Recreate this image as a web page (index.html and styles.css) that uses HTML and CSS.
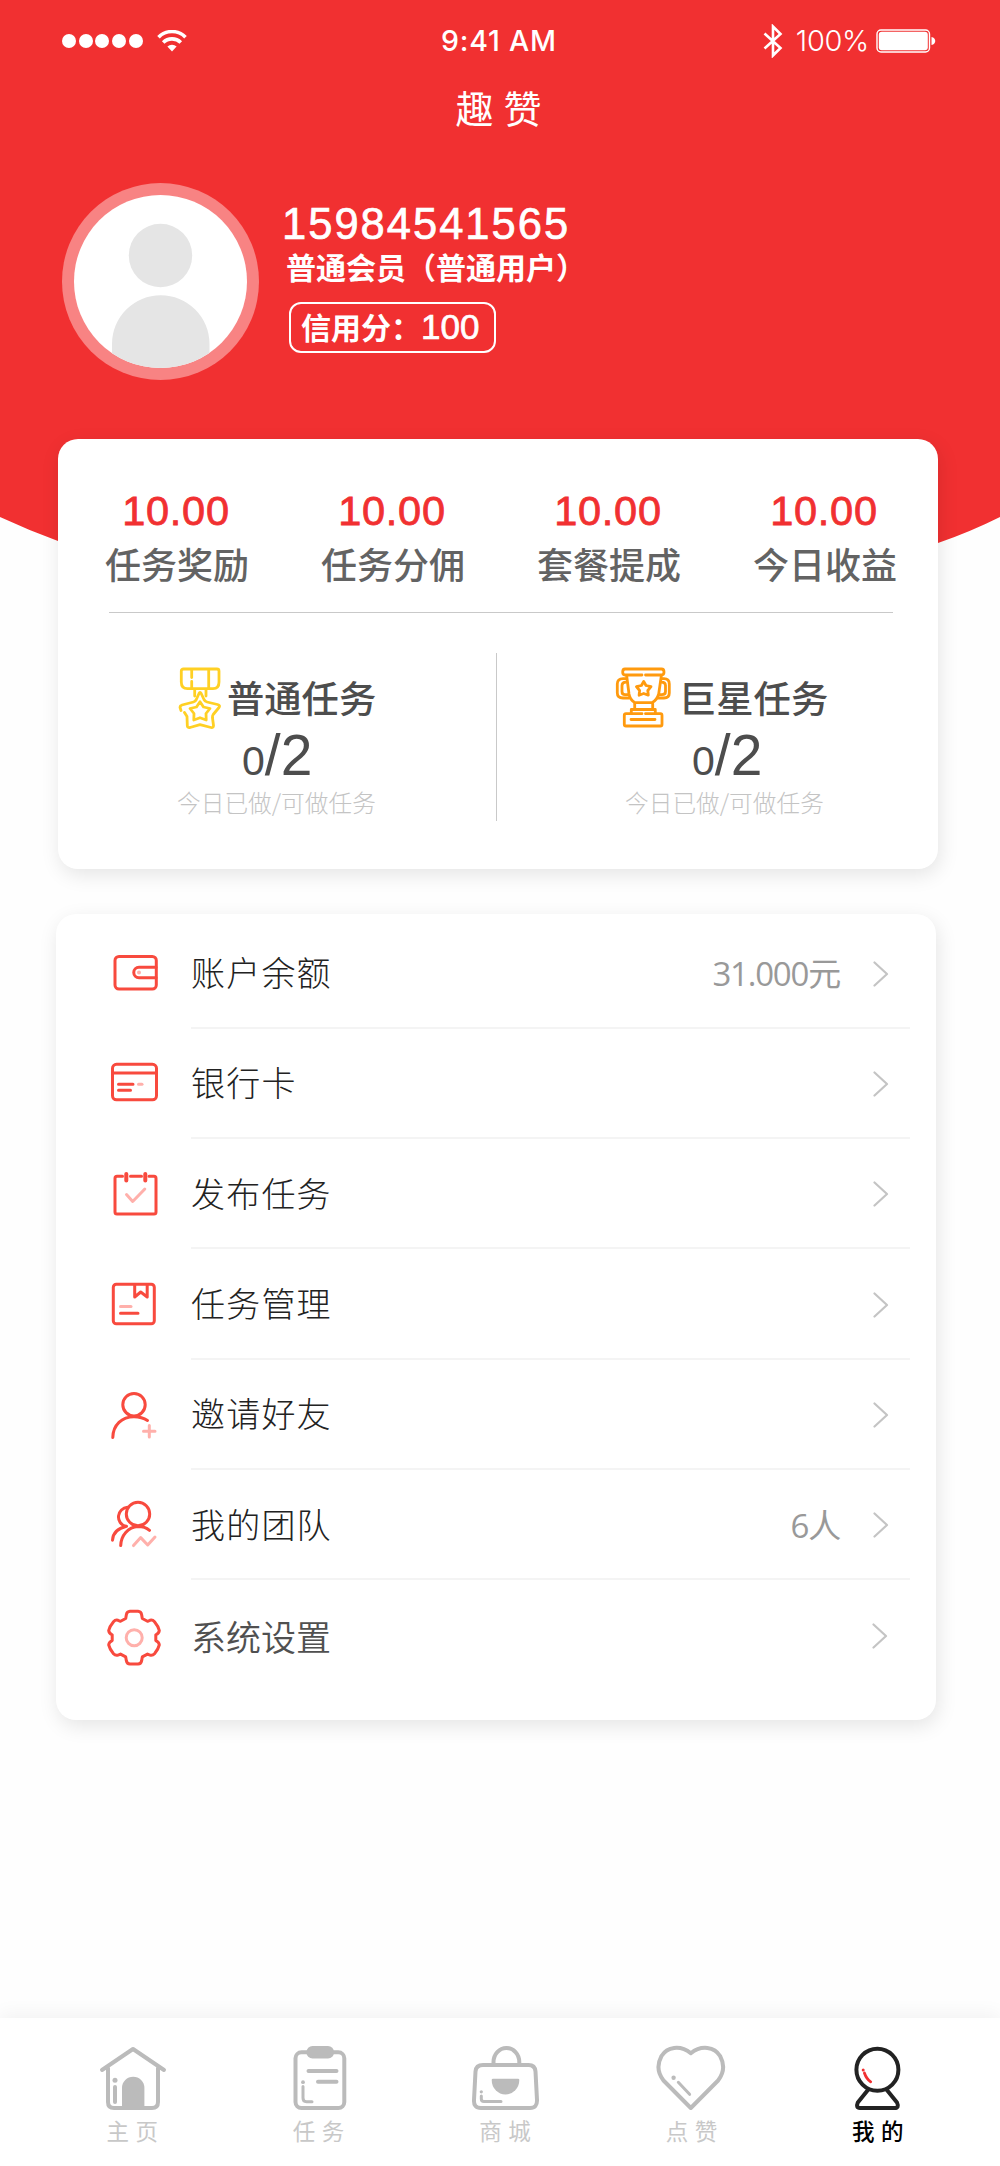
FILE: index.html
```html
<!DOCTYPE html>
<html lang="zh-CN">
<head>
<meta charset="utf-8">
<title>趣赞</title>
<link rel="stylesheet" href="styles.css">
</head>
<body>
<div class="page">
  <header class="hero">
    <div class="status">
      <div class="signal">
        <i class="dot"></i><i class="dot"></i><i class="dot"></i><i class="dot"></i><i class="dot"></i>
        <svg class="wifi" width="30" height="22" viewBox="0 0 30 22" fill="none" stroke="#fff" stroke-width="3.6"><path d="M1.500 7.200a19 19 0 0 1 27 0M6.200 12.500a12.500 12.500 0 0 1 17.600 0"/><path d="M15 21.500l-4.600-5a6.600 6.600 0 0 1 9.200 0z" fill="#fff" stroke="none"/></svg>
      </div>
      <div class="time">9:41 AM</div>
      <div class="power">
        <svg width="20" height="34" viewBox="0 0 20 34" fill="none" stroke="#fff" stroke-width="2.600"><path d="M1.500 9.500L17.500 24 10 31.500V2.500L17.500 10 1.500 24.500"/></svg>
        <span class="percent">100%</span>
        <svg width="60" height="24" viewBox="0 0 60 24"><rect x="1" y="1" width="52.500" height="22" rx="4" fill="none" stroke="#fff" stroke-width="1.400"/><rect x="2.800" y="2.800" width="49" height="18.400" rx="3" fill="#fff"/><path d="M55.500 8c5 1 5 7 0 8z" fill="#fff"/></svg>
      </div>
    </div>
    <h1 class="title">趣赞</h1>
    <div class="profile">
      <svg class="avatar" width="197" height="197" viewBox="0 0 197 197">
        <defs><clipPath id="face"><circle cx="98.500" cy="98.500" r="86.500"/></clipPath></defs>
        <circle cx="98.500" cy="98.500" r="98.500" fill="#f88383"/>
        <circle cx="98.500" cy="98.500" r="86.500" fill="#fff"/>
        <g clip-path="url(#face)" fill="#e5e5e5"><circle cx="98.500" cy="72.500" r="31.700"/><path d="M50 200v-39a48.700 48.700 0 0 1 97.500 0v39z"/></g>
      </svg>
      <div class="who">
        <div class="phone">15984541565</div>
        <div class="level">普通会员<span class="paren" lang="zh-TW">（</span>普通用户<span class="paren" lang="zh-TW">）</span></div>
        <div class="credit">信用分：<span class="score">100</span></div>
      </div>
    </div>
  </header>

  <section class="card summary">
    <div class="stats">
      <div class="stat"><b class="amount">10.00</b><span class="label">任务奖励</span></div>
      <div class="stat"><b class="amount">10.00</b><span class="label">任务分佣</span></div>
      <div class="stat"><b class="amount">10.00</b><span class="label">套餐提成</span></div>
      <div class="stat"><b class="amount">10.00</b><span class="label">今日收益</span></div>
    </div>
    <div class="tasks">
      <div class="task">
        <div class="task-head medal">
          <svg width="44" height="68" viewBox="0 0 44 68" fill="none" stroke="#ffd024" stroke-width="2.800" stroke-linejoin="round" stroke-linecap="round"><path d="M5.500 5H39Q41 5 41 7V18Q41 24.700 35 24.700H9.500Q3.300 24.700 3.300 18V7Q3.300 5 5.500 5zM13.700 5V13.500M13.700 17.500V24M30.700 5V24M16.700 25V32M28 25V32"/><path d="M3 46.500L2.200 44Q1.500 41.800 4 41L15.500 38Q17.300 37.500 18.300 35.500L21 29.500Q22 27.500 23.200 29.500L26 35.500Q27 37.500 29 38L39.500 40.500Q42.500 41.500 41 43.500L35.200 50.500Q34.300 51.700 34.500 54L35.500 61.500Q35.500 64 33 63.500L22 60.700 12 63.500Q9.300 64 9.300 61.500L9 52.500 6.500 48.500"/><path d="M22 37.700L25.500 43 32 44.500 28 49.500 28.200 56 22 53.700 15.800 56 16 49.500 12 44.500 18.500 43z"/></svg>
          <span>普通任务</span>
        </div>
        <div class="count"><span class="done">0</span>/2</div>
        <div class="hint">今日已做/可做任务</div>
      </div>
      <div class="task">
        <div class="task-head trophy">
          <svg width="60" height="68" viewBox="0 0 60 68" fill="none" stroke="#ff9a0e" stroke-width="2.800" stroke-linejoin="round" stroke-linecap="round"><path d="M31.500 11H47.500Q50 11 50 8T47.500 5H11Q8.700 5 8.700 8T11 11H28M12.700 12L15 30Q16 36 21 38.700H38Q43 36 44.700 30L47.300 12"/><path d="M12 14.700H9Q3.300 14.700 3.300 20V29Q3.300 34 9 34H15M12 18.200Q8 18.200 8 21.500V27.500Q8 30.700 11 30.700H14M48 14.700H50Q55.300 14.700 55.300 20V29Q55.300 34 50 34H44M47.500 18.200Q51.500 18.200 51.500 21.500V27.500Q51.500 30.700 48 30.700H45.500"/><path d="M20.700 39.500V45M38.700 39.500V45M17.300 49V45.500H41.300V49M28 49.700H12Q10.300 49.700 10.300 51.500V60.500Q10.300 62 12 62H46.500Q48 62 48 60.500V51.500Q48 49.700 46.500 49.700H31.500M17 55.500H41"/><path d="M29.700 17.500L32 21.500 37 22.700 33.800 26.500 34.300 31.200 29.700 29.500 25.100 31.200 25.600 26.500 22.400 22.700 27.400 21.500z"/></svg>
          <span>巨星任务</span>
        </div>
        <div class="count"><span class="done">0</span>/2</div>
        <div class="hint hint-right">今日已做/可做任务</div>
      </div>
    </div>
  </section>

  <section class="card menu">
    <a class="row">
      <svg class="icon" viewBox="0 0 60 60"><rect x="11" y="13.500" width="41.300" height="32.500" rx="4"/><path d="M52 24.300H35a5.200 5.200 0 0 0 0 10.500H52"/><circle class="pale-fill" cx="35" cy="29.600" r="2"/></svg>
      <span class="body"><span class="name">账户余额</span><span class="value">31.000元</span><svg class="chevron" viewBox="0 0 16 26"><path d="M1.500 1.500L14 13 1.500 24.500"/></svg></span>
    </a>
    <a class="row">
      <svg class="icon" viewBox="0 0 60 60"><rect x="8.500" y="11.300" width="44" height="35.500" rx="4"/><path d="M9 20H52" /><path d="M14.500 31.300H29M14.500 37.300H26.500"/><path class="pale" d="M34.500 31.300H38"/></svg>
      <span class="body"><span class="name">银行卡</span><svg class="chevron" viewBox="0 0 16 26"><path d="M1.500 1.500L14 13 1.500 24.500"/></svg></span>
    </a>
    <a class="row">
      <svg class="icon" viewBox="0 0 60 60"><path d="M18.500 13.300H13Q11 13.300 11 15.500V49Q11 51 13 51H50Q52 51 52 49V15.500Q52 13.300 50 13.300H45M26.500 13.300H37.500"/><path class="thick" d="M22.300 11V17.500M41.300 11V17.500"/><path class="pale" d="M22.500 31.500L28.700 38.500 40.800 26"/></svg>
      <span class="body"><span class="name">发布任务</span><svg class="chevron" viewBox="0 0 16 26"><path d="M1.500 1.500L14 13 1.500 24.500"/></svg></span>
    </a>
    <a class="row">
      <svg class="icon" viewBox="0 0 60 60"><rect x="9.300" y="10.200" width="41" height="39.500" rx="3"/><path d="M30.700 11V23L36.700 18 43.200 23V11M16.500 39.200H34"/><path class="pale" d="M16.500 32.500H27"/></svg>
      <span class="body"><span class="name">任务管理</span><svg class="chevron" viewBox="0 0 16 26"><path d="M1.500 1.500L14 13 1.500 24.500"/></svg></span>
    </a>
    <a class="row">
      <svg class="icon" viewBox="0 0 60 60"><circle cx="30" cy="20.700" r="11.200"/><path d="M8.800 53.500C9 41 18 32.700 30 32.700Q38 32.700 43.500 36.500"/><path class="pale" d="M45.300 41.500V53M39.500 47.300H51"/></svg>
      <span class="body"><span class="name">邀请好友</span><svg class="chevron" viewBox="0 0 16 26"><path d="M1.500 1.500L14 13 1.500 24.500"/></svg></span>
    </a>
    <a class="row">
      <svg class="icon" viewBox="0 0 60 60"><circle cx="34" cy="20" r="11.700"/><path d="M23.500 13.300A9.700 9.700 0 0 0 21.500 32.300M8.500 46.300Q9 35.500 22.500 32.300M16.700 51.600C17 41.500 24 33 34 32.500Q41 32.500 45.500 36.300"/><path class="pale" d="M29.500 51.600L36.700 43.600 43.700 51 51 43"/></svg>
      <span class="body"><span class="name">我的团队</span><span class="value">6人</span><svg class="chevron" viewBox="0 0 16 26"><path d="M1.500 1.500L14 13 1.500 24.500"/></svg></span>
    </a>
    <a class="row row-last">
      <svg class="icon gear" viewBox="0 0 60 60"><path d="M26 4.300H34Q37 4.500 37.600 7.500L38.300 11.500 43.500 14.300 46 13.300Q48.500 12.500 50.500 14.700Q54.500 19.500 55.300 23.500Q55 26.500 51.800 27.800V33.600Q55 35 55.300 37.900Q54.500 41.900 50.500 46.700Q48.500 48.900 46 48.100L43.500 47.100 38.300 49.900 37.600 53.900Q37 56.900 34 57.100H26Q23 56.900 22.400 53.900L21.700 49.900 16.500 47.100 14 48.100Q11.500 48.900 9.500 46.700Q5.500 41.900 4.700 37.900Q5 35 8.200 33.600V27.800Q5 26.500 4.700 23.500Q5.500 19.500 9.500 14.700Q11.500 12.500 14 13.300L16.500 14.300 21.700 11.500 22.400 7.500Q23 4.500 26 4.300z"/><circle class="pale" cx="30.200" cy="30.700" r="8"/></svg>
      <span class="body"><span class="name">系统设置</span><svg class="chevron" viewBox="0 0 16 26"><path d="M1.500 1.500L14 13 1.500 24.500"/></svg></span>
    </a>
  </section>

  <nav class="tabs">
    <a class="tab"><svg viewBox="0 0 72 68"><path d="M5 26L36 5 67 26M11 24V58Q11 64 17 64H55Q61 64 61 58V24"/><path class="solid" d="M25 64V44a11.200 11.200 0 0 1 22.400 0V64z"/><circle class="solid" cx="18" cy="36.300" r="2.500"/><path d="M18 43V58"/></svg><span>主页</span></a>
    <a class="tab"><svg viewBox="0 0 72 68"><rect x="11.500" y="8.300" width="48.800" height="55.700" rx="6"/><rect class="solid" x="22.500" y="2" width="27.500" height="12.500" rx="6"/><path d="M24.500 27H52.500M34 37.700H52.500"/><circle class="solid" cx="19" cy="38.200" r="1.900"/><path class="fine" d="M19 42.500V54Q19 57.700 22.500 57.700H28"/></svg><span>任务</span></a>
    <a class="tab"><svg viewBox="0 0 72 68"><path d="M13 21H58.500Q65 21 65.500 27.500L67 56Q67.300 64 60 64H11Q3.500 64 4 56L5.500 27.500Q6 21 13 21zM23.500 20V18A12.800 14 0 0 1 49.300 18V20"/><path class="solid" d="M21.700 36Q21.700 34.700 23 34.700H48Q49.300 34.700 49.300 36A13.800 14.500 0 0 1 21.700 36z"/><circle class="solid" cx="11.300" cy="47.800" r="1.600"/><path class="fine" d="M11.300 52V55Q11.300 57.500 14 57.500H31"/></svg><span>商城</span></a>
    <a class="tab"><svg viewBox="0 0 72 68"><path d="M34.800 9.300C24 .500 11 3 5.500 12Q-1.500 25 7.500 36.500L34.800 64 62.100 36.500Q71.100 25 64.100 12C58.600 3 45.600 .500 34.800 9.300z"/><circle class="solid" cx="17.600" cy="33.700" r="2.200"/><path class="fine" d="M22.300 38.300L33.600 50.300"/></svg><span>点赞</span></a>
    <a class="tab active"><svg viewBox="0 0 72 68"><circle cx="34.400" cy="25.800" r="21"/><path d="M24.900 46L14.800 58.500Q12.500 64 17 64H51.500Q56.500 64 54 58.500L43.900 46"/><circle class="red-dot" cx="20.200" cy="26" r="1.500"/><path class="red" d="M21.400 29Q23.500 35 27.700 37.800"/></svg><span>我的</span></a>
  </nav>
</div>
</body>
</html>
```
FILE: styles.css
```css
* { box-sizing: border-box; }
body {
  margin: 0;
  background: #fefefe;
  font-family: "Liberation Sans", "Noto Sans CJK SC", sans-serif;
}
svg { display: block; flex: none; }
.page {
  width: 1000px;
  height: 2166px;
  display: flex;
  flex-direction: column;
  overflow: hidden;
}

/* header */
.hero {
  height: 600px;
  flex: none;
  background: #f13031;
  color: #fff;
  clip-path: path("M0 0H1000V517Q970 532 938 543Q500 700 58 541Q28 530 0 517Z");
}
.status {
  height: 82px;
  padding: 0 64px 0 62px;
  display: grid;
  grid-template-columns: 1fr auto 1fr;
  align-items: center;
}
.signal { display: flex; align-items: center; gap: 2.700px; }
.dot { width: 14px; height: 14px; border-radius: 50%; background: #fff; }
.wifi { margin-left: 12px; }
.time { font: 500 28.500px/40px Inter, sans-serif; letter-spacing: 0.8px; }
.power { display: flex; align-items: center; justify-content: flex-end; gap: 9px; }
.power .percent { font: 300 29px/40px Inter, sans-serif; letter-spacing: -0.300px; margin: 0 -2px 0 4px; }
.title {
  margin: 0;
  height: 54px;
  padding-left: 7px;
  font-family: "Noto Sans CJK SC", sans-serif;
  font-weight: 400;
  font-size: 38px;
  line-height: 50px;
  letter-spacing: 10px;
  text-align: center;
}
.profile { display: flex; gap: 23px; padding: 47px 0 0 62px; }
.who { padding-top: 16px; display: flex; flex-direction: column; align-items: flex-start; }
.phone { font-size: 43.500px; line-height: 50px; letter-spacing: 2px; -webkit-text-stroke: 0.7px #fff; }
.level {
  margin: -3px 0 0 4px;
  font: 700 30px/40px "Noto Sans CJK SC", sans-serif;
  white-space: nowrap;
}
.paren { font-family: "Noto Sans CJK TC", sans-serif; }
.credit {
  width: 207px;
  height: 51px;
  margin: 16px 0 0 7px;
  padding-left: 10px;
  border: 2px solid #fff;
  border-radius: 12px;
  font: 700 30px/45px "Noto Sans CJK SC", sans-serif;
  white-space: nowrap;
}
.score { font: 400 35px/40px "Liberation Sans", sans-serif; -webkit-text-stroke: 0.7px #fff; }

/* cards */
.card {
  width: 880px;
  flex: none;
  background: #fff;
  border-radius: 20px;
  box-shadow: 2px 6px 20px rgba(0, 0, 0, 0.1);
  position: relative;
}
.summary { height: 430px; margin: -161px 0 0 58px; }
.stats {
  height: 174px;
  margin: 0 45px 0 51px;
  padding-top: 51px;
  border-bottom: 1px solid #c9c9c9;
  display: flex;
  gap: 72px;
}
.stat { flex: none; width: 144px; margin-left: -4px; margin-right: 4px; display: flex; flex-direction: column; align-items: center; }
.amount {
  font-weight: 400;
  font-size: 41.500px;
  line-height: 42px;
  letter-spacing: 0.7px;
  color: #f13031;
  -webkit-text-stroke: 0.8px #f13031;
  padding-right: 2px;
}
.label { font: 500 36px/48px "Noto Sans CJK SC", sans-serif; color: #636363; white-space: nowrap; margin-top: 7px; }
.tasks { display: flex; margin-top: 40px; height: 168px; color: #4d4d4d; }
.task { width: 438px; }
.task + .task { width: 442px; border-left: 1px solid #c9c9c9; }
.task-head {
  height: 68px;
  margin-top: 11px;
  display: flex;
  align-items: center;
  font: 500 37.300px/48px "Noto Sans CJK SC", sans-serif;
}
.task-head span { margin-top: -2px; }
.medal { padding-left: 120px; gap: 5px; }
.trophy { padding-left: 117px; gap: 5px; }
.count { margin: -5px 0 0 184px; font-size: 57px; line-height: 56px; }
.task + .task .count { margin-left: 195px; }
.done { font-size: 41px; }
.hint {
  margin: -3px 0 0 119px;
  font: 300 23.700px/32px "Noto Sans CJK SC", sans-serif;
  color: #c4c4c4;
  white-space: nowrap;
}
.hint-right { margin-left: 128px; }

/* menu */
.menu { height: 806px; margin: 45px 0 0 56px; padding-top: 4.500px; }
.row { height: 110.300px; padding: 0 26px 0 48px; display: flex; align-items: center; }
.icon {
  width: 60px;
  height: 60px;
  margin: -2px 27px 0 0;
  fill: none;
  stroke: #f84a3e;
  stroke-width: 3;
  stroke-linecap: round;
  stroke-linejoin: round;
}
.icon .pale { stroke: #ffb0ab; }
.icon .thick { stroke-width: 4; }
.icon .pale-fill { fill: #ffb0ab; stroke: none; }
.body { flex: 1; height: 100%; display: flex; align-items: center; border-bottom: 2px solid #f4f4f4; padding: 0 21px 0 0; }
.name {
  flex: 1;
  font: 300 34px/50px "Noto Sans CJK SC", sans-serif;
  letter-spacing: 1.200px;
  color: #222;
  margin-top: -1px;
}
.value { font: 400 33px/44px "Open Sans", "Noto Sans CJK SC", sans-serif; letter-spacing: -1.200px; color: #999; margin: 3px 33px 0 0; }
.chevron { width: 16px; height: 26px; fill: none; stroke: #c4c4c4; stroke-width: 2.200; stroke-linecap: round; stroke-linejoin: round; margin-top: 2px; }
.row-last { height: 115px; }
.row-last .body { border: 0; padding-right: 22px; }
.row-last .name { font-weight: 350; font-size: 35px; letter-spacing: 0; color: #505050; margin-top: -3px; }
.row-last .chevron { margin-top: -3px; }

/* bottom tabs */
.tabs {
  height: 148px;
  margin-top: auto;
  padding: 26px 28px 0 40px;
  display: grid;
  grid-template-columns: repeat(5, 1fr);
  background: #fff;
  box-shadow: 0 -4px 18px rgba(0, 0, 0, 0.05);
}
.tab { display: flex; flex-direction: column; align-items: center; color: #c8c8c8; }
.tab svg { width: 72px; height: 68px; fill: none; stroke: #bbb; stroke-width: 4; stroke-linecap: round; stroke-linejoin: round; }
.tab .solid { fill: #bbb; stroke: none; }
.tab .fine { stroke-width: 3; }
.tab span { font: 400 22.500px/32px "Noto Sans CJK SC", sans-serif; letter-spacing: 6.500px; margin: 2px -4.500px 0 0; }
.tab.active { color: #000; }
.tab.active span { font-weight: 500; }
.tab.active svg { stroke: #222; }
.tab .red { stroke: #f13031; stroke-width: 2.800; }
.tab .red-dot { fill: #f13031; stroke: none; }
```
